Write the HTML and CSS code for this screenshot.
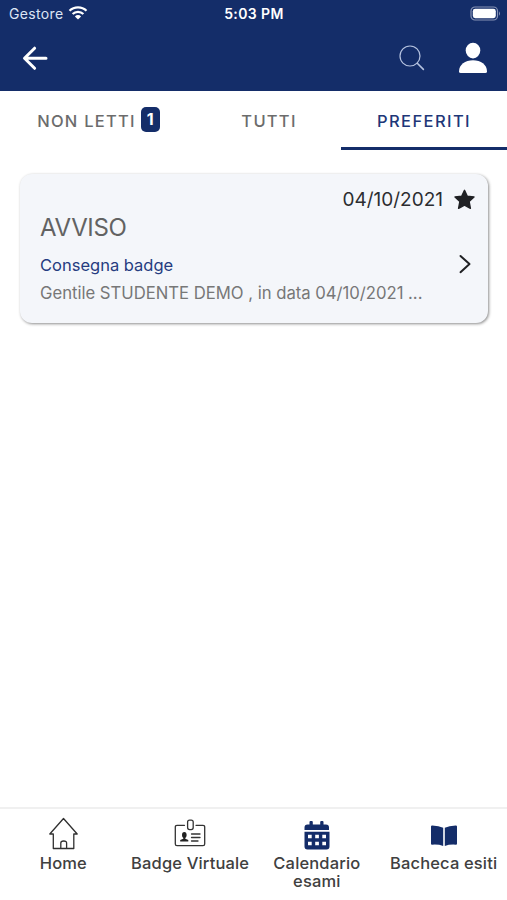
FILE: index.html
```html
<!DOCTYPE html>
<html lang="it">
<head>
<meta charset="utf-8">
<meta name="viewport" content="width=device-width, initial-scale=1">
<title>Avvisi</title>
<link rel="stylesheet" href="styles.css">
</head>
<body>
<header class="top">
  <div class="status">
    <div class="carrier"><span class="carrier-name">Gestore</span>
      <svg class="wifi" width="20" height="16" viewBox="0 0 20 16" fill="none" stroke="#fff" stroke-width="2.200"><path d="M1.500 5.800a12.200 12.200 0 0 1 17 0M4.600 9a7.700 7.700 0 0 1 10.800 0"/><path d="M6.900 11.400a4.400 4.400 0 0 1 6.200 0L10 14.500z" fill="#fff" stroke="none"/></svg>
    </div>
    <span class="time">5:03 PM</span>
    <svg class="battery" width="31" height="15" viewBox="0 0 31 15"><rect x="1" y="1" width="26.500" height="13" rx="4" fill="none" stroke="#8793b5" stroke-width="1.200"/><rect x="2.800" y="2.800" width="23" height="9.400" rx="2.400" fill="#fff"/><path d="M29 5.200q2 2.300 0 4.600z" fill="#8793b5"/></svg>
  </div>
  <div class="bar">
    <svg class="back" width="26" height="26" viewBox="0 0 26 26" fill="none" stroke="#fff" stroke-width="3" stroke-linecap="round" stroke-linejoin="round"><path d="M12.600 3.200 2.500 13.300l10.100 10M3 13.300h21"/></svg>
    <svg class="search" width="26" height="26" viewBox="0 0 26 26" fill="none" stroke="#b5c2df" stroke-width="1.200" stroke-linecap="round"><circle cx="11" cy="11" r="10"/><path d="m18.300 18.200 6.100 6.200" stroke-width="1.600"/></svg>
    <svg class="user" width="30" height="32" viewBox="0 0 30 32" fill="#fff"><ellipse cx="15" cy="8.600" rx="7.300" ry="7.800"/><path d="M1 29.400C1 22.600 7.200 18.200 15 18.200s14 4.400 14 11.200q0 1.700-1.700 1.700H2.700Q1 31.100 1 29.400z"/></svg>
  </div>
</header>
<nav class="tabs">
  <div class="tab tab-unread"><span>NON LETTI</span><b class="count">1</b></div>
  <div class="tab tab-all"><span>TUTTI</span></div>
  <div class="tab tab-active"><span>PREFERITI</span></div>
</nav>
<main>
  <article class="card">
    <div class="meta"><span class="date">04/10/2021</span>
      <svg width="21" height="21" viewBox="0 0 21 21" fill="#202124" stroke="#202124" stroke-width="1.400" stroke-linejoin="round"><path d="m10.500 1.300 2.800 6 6.700.700-4.900 4.500 1.300 6.800-5.900-3.200-5.900 3.200 1.300-6.800L1 8l6.700-.700z"/></svg>
    </div>
    <h1>AVVISO</h1>
    <div class="row">
      <h2>Consegna badge</h2>
      <svg width="12" height="20" viewBox="0 0 12 20" fill="none" stroke="#202124" stroke-width="2" stroke-linecap="round" stroke-linejoin="round"><path d="m1.500 2 9 8-9 8.200"/></svg>
    </div>
    <p>Gentile STUDENTE DEMO , in data 04/10/2021 ...</p>
  </article>
</main>
<nav class="bottom">
  <div class="item">
    <svg width="32" height="34" viewBox="0 0 32 34" fill="none" stroke="#303030" stroke-width="1.300" stroke-linejoin="round"><path d="M16.500 1.500 2.800 17h3.500v14.500h20.500V17h3.400zM13.800 31.500V26q0-2 2.900-2t2.900 2v5.500"/></svg>
    <span>Home</span>
  </div>
  <div class="item">
    <svg width="32" height="34" viewBox="0 0 32 34" fill="none" stroke="#333" stroke-width="1.300" stroke-linecap="round"><path d="M10.500 8.300H3q-1.700 0-1.700 1.700v17q0 1.700 1.700 1.700h26q1.700 0 1.700-1.700V10q0-1.700-1.700-1.700h-7"/><rect x="13.600" y="3.100" width="5.600" height="9.500" rx="2"/><ellipse cx="10.300" cy="18" rx="2.300" ry="3" fill="#222" stroke="none"/><path d="M9.300 19.500h2v2.200l3 1.300v1.500H6.200V23l3.100-1.300z" fill="#222" stroke="none"/><path d="M17.500 17h8.500M17.500 20.500h8.500M17.500 24h6.500"/></svg>
    <span>Badge Virtuale</span>
  </div>
  <div class="item">
    <svg width="32" height="34" viewBox="0 0 32 34" fill="#142d69"><path d="M3.500 13v-2.500q0-3 3-3H8.500V5q0-1 1-1h1.300q1 0 1 1v2.500h7.400V5q0-1 1-1h1.300q1 0 1 1v2.500h2.500q3 0 3 3V13z"/><path fill-rule="evenodd" d="M3.500 14.700h25V29.500q0 3-3 3h-19q-3 0-3-3zM7 17.700v3.500h3.700v-3.500zm7.200 0v3.500h3.700v-3.500zm7.100 0v3.500H25v-3.500zM7 24.700v3.500h3.700v-3.500zm7.200 0v3.500h3.700v-3.500zm7.100 0v3.500H25v-3.500z"/></svg>
    <span>Calendario<br>esami</span>
  </div>
  <div class="item">
    <svg width="32" height="34" viewBox="0 0 32 34" fill="#142d69"><path d="M3 9.500q0-1.200 1.300-1.100Q11 8.600 15.200 10.700v18.300Q10.500 27.200 4 27.700q-1 0-1-1zM29 9.500q0-1.200-1.300-1.100-6.700.200-10.900 2.300v18.300q4.700-1.800 11.200-1.300 1 0 1-1z"/></svg>
    <span>Bacheca esiti</span>
  </div>
</nav>
</body>
</html>
```
FILE: styles.css
```css
* { box-sizing: border-box; }
body {
  margin: 0;
  height: 900px;
  display: flex;
  flex-direction: column;
  background: #fff;
  font-family: Inter, "Liberation Sans", sans-serif;
  color: #303030;
}
svg { display: block; flex: none; }
.top { height: 91px; background: #142d69; color: #fff; }
.status {
  height: 27px;
  padding: 0 6px 0 9px;
  display: grid;
  grid-template-columns: 1fr auto 1fr;
  align-items: center;
  font-size: 14px;
}
.carrier { display: flex; align-items: center; gap: 4px; }
.carrier-name { color: #dde5f5; letter-spacing: 0.35px; }
.wifi { margin-top: -2px; }
.time { font-weight: 600; letter-spacing: 0.4px; margin-right: 2px; }
.battery { justify-self: end; }
.bar { height: 64px; padding: 0 19px 0 22px; display: flex; align-items: center; }
.back { margin-top: -3px; }
.search { margin: -2px 33px 0 auto; }
.user { margin-top: -3px; }
.tabs { height: 59px; display: flex; font-size: 16.5px; font-weight: 500; color: #6c6c6c; letter-spacing: 1.25px; }
.tab { display: flex; align-items: center; justify-content: center; }
.tab-unread { width: 197px; gap: 5px; }
.tab-all { width: 144px; }
.tab-active { width: 166px; color: #1e3778; border-bottom: 3px solid #142d69; padding-top: 3px; letter-spacing: 1.4px; }
.count {
  width: 19px;
  height: 25px;
  margin-top: -3px;
  border-radius: 5px;
  background: #142d69;
  color: #fff;
  font-size: 16px;
  letter-spacing: 0;
  line-height: 25px;
  text-align: center;
}
main { flex: 1; padding: 24px 19px 0 20px; }
.card {
  height: 149px;
  padding: 12px 13px 0 20px;
  border-radius: 12px;
  background: #f4f6fa;
  box-shadow: 1px 1px 3px rgba(0, 0, 0, 0.45);
}
.meta { display: flex; justify-content: flex-end; align-items: center; gap: 11px; height: 26px; font-size: 19px; color: #2c2d30; }
h1, h2, p { margin: 0; font-weight: 400; }
h1 { font-size: 24px; line-height: 32px; letter-spacing: -0.35px; color: #626262; }
.row { display: flex; align-items: center; justify-content: space-between; height: 40px; padding-right: 4px; }
h2 { font-size: 16.5px; margin-top: 2px; color: #263c80; }
p { font-size: 16.7px; line-height: 22px; margin-top: -2px; letter-spacing: -0.02px; color: #777; white-space: nowrap; }
.bottom { height: 93px; border-top: 2px solid #f0f0f0; display: grid; grid-template-columns: repeat(4, 1fr); padding-top: 8px; }
.item { display: flex; flex-direction: column; align-items: center; font-size: 16.5px; letter-spacing: 0.15px; line-height: 18px; font-weight: 500; color: #404040; text-align: center; white-space: nowrap; }
.item span { margin-top: 3px; }
```
